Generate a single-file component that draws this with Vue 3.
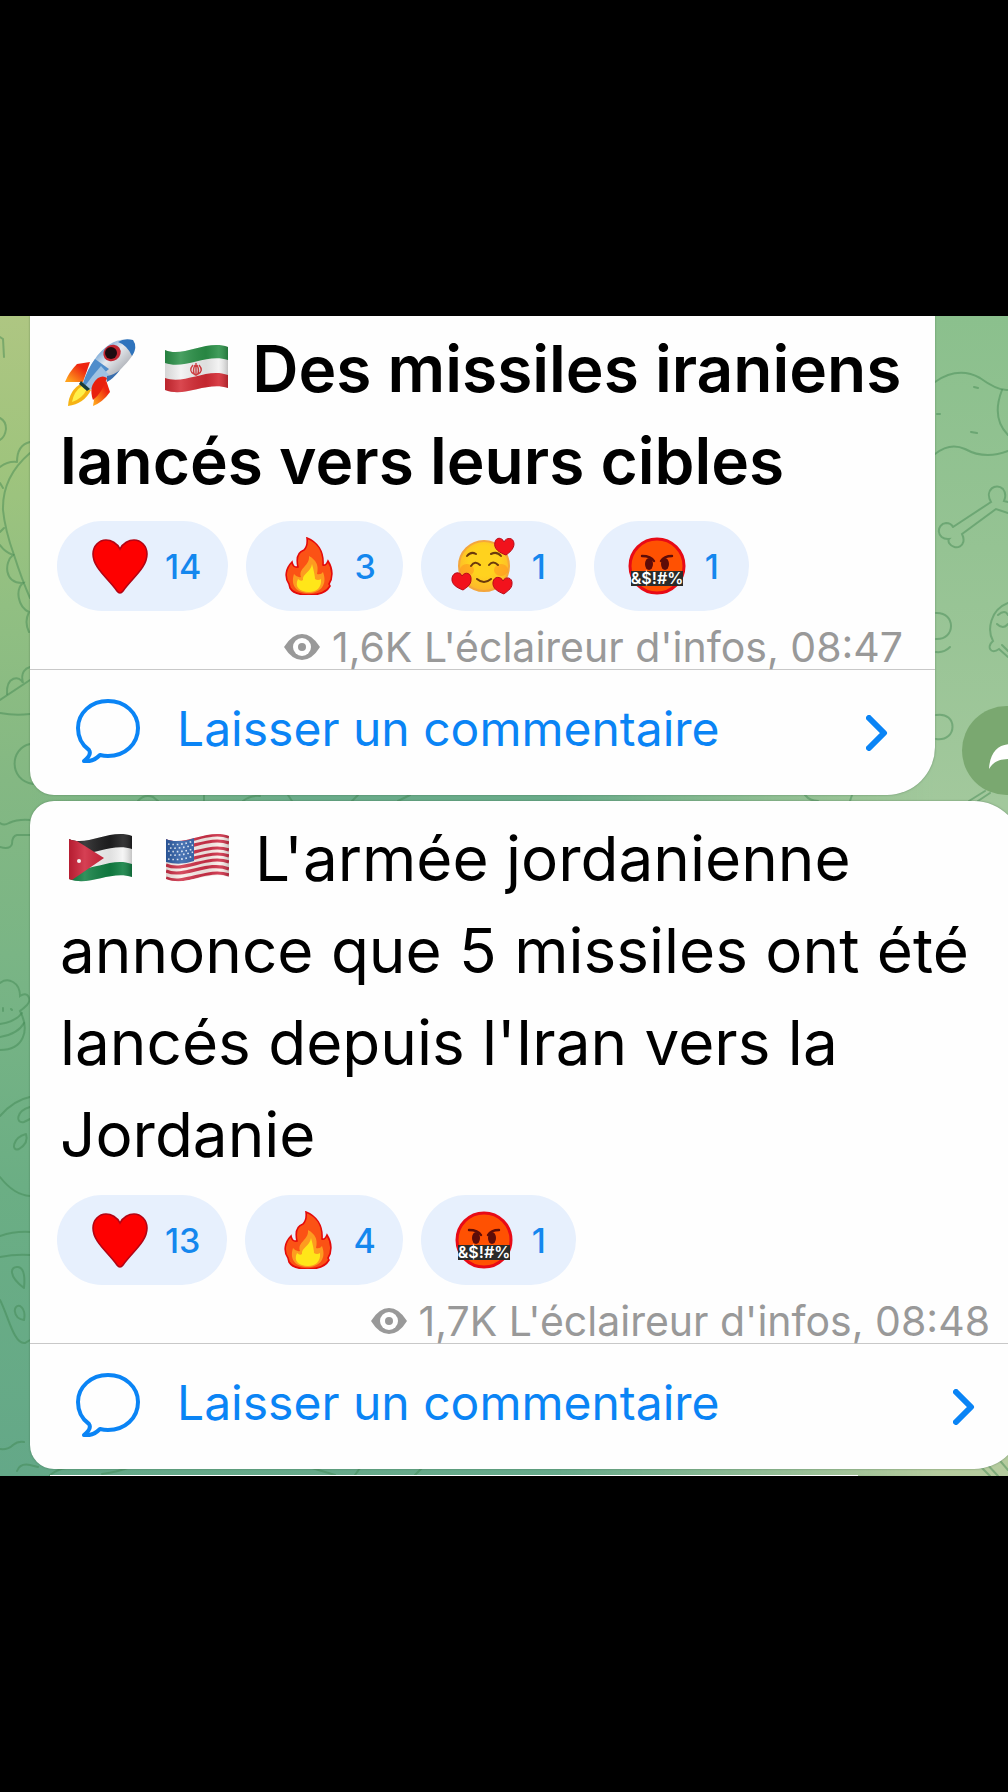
<template>
  <main class="page">
    <!-- 图标定义 -->
    <svg class="sprite" aria-hidden="true">
      <defs>
        <linearGradient id="rocketBody" x1="0" y1="0" x2="1" y2="1">
          <stop offset="0.2" stop-color="#4d8fd0" />
          <stop offset="0.45" stop-color="#e6eaee" />
          <stop offset="0.65" stop-color="#b9bcc2" />
          <stop offset="0.9" stop-color="#3a6fae" />
        </linearGradient>
        <linearGradient id="rocketFin" x1="1" y1="0" x2="0" y2="1">
          <stop offset="0.3" stop-color="#ee2410" />
          <stop offset="0.9" stop-color="#ffa21c" />
        </linearGradient>
        <linearGradient id="flagShade" x1="0" y1="0" x2="1" y2="0">
          <stop offset="0" stop-color="#000" stop-opacity="0.12" />
          <stop offset="0.25" stop-color="#fff" stop-opacity="0.14" />
          <stop offset="0.65" stop-color="#000" stop-opacity="0.08" />
          <stop offset="0.85" stop-color="#fff" stop-opacity="0.1" />
          <stop offset="1" stop-color="#000" stop-opacity="0.2" />
        </linearGradient>
        <radialGradient id="faceGold" cx="0.5" cy="0.4" r="0.6">
          <stop offset="0.5" stop-color="#ffd21e" />
          <stop offset="1" stop-color="#fdb52c" />
        </radialGradient>
        <clipPath id="flagClip">
          <path d="M8 21 C26 29 50 10 71 18 V59 C50 52 28 69 8 61 Z" />
        </clipPath>

        <symbol id="rocket" viewBox="0 0 78 78">
          <path d="M29 33 L16 35 Q8 43 4 53 L22 53 Z" fill="url(#rocketFin)" />
          <path d="M45 51 L49 63 Q42 73 32 77 L35 59 Z" fill="url(#rocketFin)" />
          <path d="M21 54 Q8 61 7 77 Q23 75 30 61 Z" fill="#f6b314" />
          <path d="M21 57 Q13 62 11 73 Q21 70 26 60 Z" fill="#fff04a" />
          <path d="M72 11 C56 7 43 18 36 27 Q27 39 22 55 L29 60 Q45 54 57 43 C67 33 79 22 72 11 Z" fill="url(#rocketBody)" />
          <path d="M72 11 Q63 9 57 13 Q66 16 71 27 Q77 18 72 11 Z" fill="#2f74bd" />
          <path d="M34 30 L48 40 Q34 52 27 58 L22 54 Q27 39 34 30 Z" fill="#4f8dcb" />
          <path d="M40 37 Q31 47 24 57 L29 61 Q41 54 48 46 Z" fill="#9fc2e2" />
          <path d="M46 47 Q53 46 59 41 Q52 50 46 53 Z" fill="#3a6fae" />
          <path d="M37 49 Q27 57 32 71 Q41 64 46 49 Q42 46 37 49 Z" fill="#e8200e" />
          <path d="M20 52 L29 60 L26 62 L18 55 Z" fill="#173c3b" />
          <ellipse cx="51" cy="24" rx="9" ry="8" fill="#c22631" transform="rotate(-35 51 24)" />
          <ellipse cx="50" cy="24" rx="6" ry="6" fill="#1c0b10" />
        </symbol>

        <symbol id="iran" viewBox="0 0 78 78">
          <g clip-path="url(#flagClip)">
            <rect x="8" y="10" width="63" height="60" fill="#f2f2f2" />
            <path d="M8 10 H71 V31 C50 24 28 41 8 34 Z" fill="#2b9148" />
            <path d="M8 49 C28 56 50 38 71 46 V70 H8 Z" fill="#d42a33" />
            <g fill="none" stroke="#d8383c" stroke-width="1.4">
              <path d="M39 34 V47 M36 36 Q31 42 37 45 M42 36 Q47 42 41 45 M38 36 Q35 42 38 46 M40 36 Q43 42 40 46" />
            </g>
            <rect x="8" y="10" width="63" height="60" fill="url(#flagShade)" />
          </g>
        </symbol>

        <symbol id="jordan" viewBox="0 0 78 78">
          <g clip-path="url(#flagClip)">
            <rect x="8" y="10" width="63" height="60" fill="#f4f4f4" />
            <path d="M8 10 H71 V31 C50 24 28 41 8 34 Z" fill="#1f1f20" />
            <path d="M8 49 C28 56 50 38 71 46 V70 H8 Z" fill="#118043" />
            <path d="M8 18 L43 40 L8 64 Z" fill="#cf2138" />
            <circle cx="18" cy="43" r="2" fill="#fff" />
            <rect x="8" y="10" width="63" height="60" fill="url(#flagShade)" />
          </g>
        </symbol>

        <symbol id="usa" viewBox="0 0 78 78">
          <g clip-path="url(#flagClip)">
            <rect x="8" y="10" width="63" height="60" fill="#fbeeea" />
            <g fill="none" stroke="#cf3048" stroke-width="3.2">
              <path d="M8 22 C26 30 50 11 71 19" />
              <path d="M8 28 C26 36 50 17 71 25" />
              <path d="M8 35 C26 43 50 24 71 32" />
              <path d="M8 41 C26 49 50 30 71 38" />
              <path d="M8 47 C26 55 50 36 71 44" />
              <path d="M8 53 C26 61 50 42 71 51" />
              <path d="M8 60 C26 68 50 49 71 57" />
            </g>
            <path d="M8 18 Q22 27 36 20 V43 Q22 48 8 44 Z" fill="#2f5fa8" />
            <g fill="none" stroke="#dfe9f7" stroke-width="1.6" stroke-dasharray="1.6 2.8">
              <path d="M10 26 Q22 28 35 23" />
              <path d="M12 30 Q22 31 35 27" />
              <path d="M10 33 Q22 35 35 31" />
              <path d="M12 37 Q22 38 35 34" />
              <path d="M10 41 Q22 43 35 38" />
            </g>
            <rect x="8" y="10" width="63" height="60" fill="url(#flagShade)" />
          </g>
        </symbol>

        <symbol id="heart" viewBox="0 0 58 58">
          <path d="M29 12 C32 6 38 3 43 3 C50 3 56 9 56 17 C56 31 41 41 32 54 Q29 58 26 54 C17 41 2 31 2 17 C2 9 8 3 15 3 C20 3 26 6 29 12 Z" fill="#fe0000" stroke="#b30413" stroke-width="1.6" />
        </symbol>

        <symbol id="fire" viewBox="0 0 58 58">
          <path d="M27 1 C37 5 44 14 43 28 Q46 29 48 24 C53 32 53 41 49 47 L50 49 Q45 58 29 58 Q14 58 10 51 L9 47 C4 40 6 31 12 25 Q13 31 18 30 C16 21 18 15 24 13 Q28 9 27 1 Z" fill="#fb5215" stroke="#e40a0a" stroke-width="1.6" />
          <path d="M29 19 Q40 25 37 37 Q41 38 43 35 C48 48 40 56 29 56 C17 56 10 49 14 37 Q17 41 21 40 C18 31 30 29 29 19 Z" fill="#fd9b20" />
          <path d="M32 27 Q35 38 35 42 Q38 44 41 42 C42 51 36 55 29 55 C20 55 14 50 18 42 Q21 45 23 43 C22 37 31 35 32 27 Z" fill="#ffe619" />
        </symbol>

        <symbol id="loved" viewBox="0 0 66 58">
          <circle cx="33" cy="29" r="25" fill="url(#faceGold)" stroke="#f4a63c" stroke-width="2" />
          <ellipse cx="16" cy="33" rx="7" ry="6" fill="#ff8c1e" opacity="0.5" />
          <ellipse cx="50" cy="33" rx="7" ry="6" fill="#ff8c1e" opacity="0.5" />
          <g fill="none" stroke="#6b3a0c" stroke-width="2" stroke-linecap="round">
            <path d="M16 19 Q20 14 25 17" />
            <path d="M40 17 Q46 14 50 19" />
            <path d="M20 29 Q24 23 29 28" />
            <path d="M38 28 Q42 23 47 28" />
            <path d="M26 42 Q33 48 40 42" />
          </g>
          <g fill="#f2121c" stroke="#b80a18" stroke-width="1">
            <path d="M53 5 C55 0 63 0 63 7 C63 12 58 16 55 18 C49 16 42 12 44 5 C45 0 51 0 53 5 Z" />
            <path d="M11 39 C14 34 21 36 20 43 C20 48 15 51 12 53 C7 51 0 48 1 41 C2 35 9 34 11 39 Z" />
            <path d="M52 44 C54 39 62 40 61 47 C61 52 55 55 53 57 C48 55 41 52 42 45 C43 39 50 39 52 44 Z" />
          </g>
        </symbol>

        <symbol id="cursing" viewBox="0 0 58 58">
          <circle cx="29" cy="29" r="27" fill="#ff5102" stroke="#e80a16" stroke-width="3" />
          <g fill="none" stroke="#5e0c08" stroke-width="2.4" stroke-linecap="round">
            <path d="M14 19 Q23 19 26 24" />
            <path d="M44 19 Q36 19 33 24" />
          </g>
          <ellipse cx="21" cy="27" rx="4" ry="6" fill="#5e0c08" />
          <ellipse cx="37" cy="27" rx="4" ry="6" fill="#5e0c08" />
          <rect x="3" y="34" width="52" height="15" fill="#2b2b29" />
          <text x="29" y="47" class="curse-text" text-anchor="middle">&amp;$!#%</text>
        </symbol>
      </defs>
    </svg>

    <section class="chat">
      <!-- 聊天壁纸 -->
      <svg class="wallpaper" viewBox="0 316 1008 1160" preserveAspectRatio="none" aria-hidden="true">
        <defs>
          <linearGradient id="wallLeft" x1="0" y1="0" x2="0" y2="1">
            <stop offset="0" stop-color="#aec682" />
            <stop offset="0.13" stop-color="#9fc47d" />
            <stop offset="0.25" stop-color="#91bf82" />
            <stop offset="0.4" stop-color="#84b883" />
            <stop offset="0.55" stop-color="#7ab585" />
            <stop offset="0.75" stop-color="#6bae84" />
            <stop offset="1" stop-color="#64a888" />
          </linearGradient>
          <linearGradient id="wallRight" x1="0" y1="0" x2="0" y2="1">
            <stop offset="0" stop-color="#8bc08d" />
            <stop offset="0.2" stop-color="#95c393" />
            <stop offset="0.42" stop-color="#a2c89c" />
            <stop offset="1" stop-color="#b5cb9e" />
          </linearGradient>
          <linearGradient id="wallFade" x1="0" y1="0" x2="1" y2="0">
            <stop offset="0.55" stop-color="#000" />
            <stop offset="0.93" stop-color="#fff" />
          </linearGradient>
          <linearGradient id="wallMid" x1="0" y1="0" x2="1" y2="0">
            <stop offset="0.03" stop-color="#66a98a" stop-opacity="0" />
            <stop offset="0.3" stop-color="#66a98a" stop-opacity="0.9" />
            <stop offset="0.6" stop-color="#66a98a" stop-opacity="0.9" />
            <stop offset="0.93" stop-color="#66a98a" stop-opacity="0" />
          </linearGradient>
          <mask id="wallMask">
            <rect x="0" y="316" width="1008" height="1160" fill="url(#wallFade)" />
          </mask>
        </defs>
        <rect x="0" y="316" width="1008" height="1160" fill="url(#wallLeft)" />
        <rect x="0" y="316" width="1008" height="1160" fill="url(#wallMid)" />
        <rect x="0" y="316" width="1008" height="1160" fill="url(#wallRight)" mask="url(#wallMask)" />
        <g class="doodles">
          <path v-for="(d, index) in doodles" :key="index" :d="d" />
        </g>
      </svg>

      <!-- 消息列表 -->
      <div v-for="post in posts" :key="post.id" :class="['row', post.share ? 'row-share' : 'row-wide']">
        <article :class="['bubble', post.share ? 'bubble-cut' : 'bubble-full']">
          <p :class="['message', { 'message-bold': post.bold }]">
            <template v-for="name in post.emojis" :key="name">
              <svg class="emoji" role="img" :aria-label="name"><use :href="'#' + name" /></svg>{{ ' ' }}
            </template>{{ post.text }}
          </p>

          <div class="reactions">
            <button v-for="r in post.reactions" :key="r.icon" type="button" class="reaction">
              <svg :class="['reaction-icon', { 'reaction-loved': r.icon === 'loved' }]" role="img" :aria-label="r.icon">
                <use :href="'#' + r.icon" />
              </svg>
              <span class="reaction-count">{{ r.count }}</span>
            </button>
          </div>

          <div class="meta">
            <svg class="eye" viewBox="0 0 36 26" aria-hidden="true">
              <path d="M0 13 Q8 0 18 0 Q28 0 36 13 Q28 26 18 26 Q8 26 0 13 Z" fill="#999" />
              <circle cx="18" cy="13" r="9" fill="#fff" />
              <circle cx="18" cy="13" r="4" fill="#999" />
            </svg>
            <span>{{ post.views }} L'éclaireur d'infos, {{ post.time }}</span>
          </div>

          <button type="button" class="comment">
            <svg class="comment-icon" viewBox="0 0 64 64" aria-hidden="true">
              <path d="M32 2 C49 2 62 14 62 29 C62 45 49 57 32 57 Q28 57 24 56 C19 61 14 63 8 62 C13 58 15 54 13 51 C6 46 2 38 2 29 C2 14 15 2 32 2 Z" fill="none" stroke="currentColor" stroke-width="4" stroke-linejoin="round" />
            </svg>
            <span class="comment-label">Laisser un commentaire</span>
            <svg class="chevron" viewBox="0 0 22 36" aria-hidden="true">
              <path d="M3 3 L18 18 L3 33" fill="none" stroke="currentColor" stroke-width="6" stroke-linecap="round" stroke-linejoin="round" />
            </svg>
          </button>
        </article>

        <button v-if="post.share" type="button" class="share" aria-label="Partager">
          <svg viewBox="0 0 89 89" aria-hidden="true">
            <path d="M27 63 C28 46 36 38 49 38 V27 L70 45 L49 63 V53 C38 53 32 55 27 63 Z" fill="#fff" />
          </svg>
        </button>
      </div>

      <div class="next-edge"></div>
    </section>
  </main>
</template>

<script setup>
import { ref } from 'vue'

const posts = ref([
  {
    id: 1,
    emojis: ['rocket', 'iran'],
    text: 'Des missiles iraniens lancés vers leurs cibles',
    bold: true,
    share: true,
    views: '1,6K',
    time: '08:47',
    reactions: [
      { icon: 'heart', count: 14 },
      { icon: 'fire', count: 3 },
      { icon: 'loved', count: 1 },
      { icon: 'cursing', count: 1 }
    ]
  },
  {
    id: 2,
    emojis: ['jordan', 'usa'],
    text: "L'armée jordanienne annonce que 5 missiles ont été lancés depuis l'Iran vers la Jordanie",
    bold: false,
    share: false,
    views: '1,7K',
    time: '08:48',
    reactions: [
      { icon: 'heart', count: 13 },
      { icon: 'fire', count: 4 },
      { icon: 'cursing', count: 1 }
    ]
  }
])

// 壁纸线条
const doodles = [
  'M0 337 L3 339 L4 357',
  'M0 418 Q6 421 6 429 Q5 437 0 440',
  'M30 453 Q2 477 3 510 Q5 530 14 555 Q22 580 30 598',
  'M17 462 Q17 445 30 442 M0 467 Q8 461 17 462',
  'M0 483 L3 488 M0 532 L4 528',
  'M0 545 Q5 552 13 555 C4 562 4 584 23 583 C15 590 18 607 29 612 Q24 622 29 632',
  'M0 700 L30 680 M0 713 Q15 716 30 714',
  'M7 694 C6 676 20 675 23 683 C20 672 26 668 30 667',
  'M30 744 C10 748 8 780 33 784',
  'M0 823 Q4 826 9 823 Q18 819 30 820 M30 835 L17 835 Q12 836 12 844 Q10 850 0 847',
  'M0 983 C8 977 20 982 20 996 C28 990 32 1000 27 1005 Q23 1009 20 1011 C30 1030 24 1050 0 1050',
  'M0 1024 Q15 1022 22 1013 M0 1037 Q18 1034 24 1023 M3 1008 V1011 M11 1009 L12 1010',
  'M0 1116 Q14 1100 30 1097 M0 1177 Q14 1195 30 1196',
  'M30 1107 C16 1111 15 1124 24 1122 L30 1119 M26 1134 C12 1138 11 1152 19 1149 Q29 1143 26 1134',
  'M0 1236 Q15 1231 30 1232 M0 1257 Q15 1254 30 1255 M0 1300 C8 1315 14 1345 25 1343 L30 1340',
  'M24 1288 C8 1276 10 1266 18 1267 C25 1268 25 1278 24 1288 M24 1320 C12 1318 13 1304 20 1306 Q26 1310 24 1320',
  'M0 1449 Q8 1450 13 1445 Q18 1441 24 1442 M17 1471 Q20 1463 30 1465 L38 1467',
  'M50 1475 Q58 1469 66 1468 M102 1474 Q118 1472 130 1467 M312 1468 L335 1475 M355 1475 L360 1468 M415 1475 L422 1468',
  'M138 801 Q144 794 153 797 L158 801 M204 795 V801 M243 801 Q250 795 260 796 M288 795 L292 801 M352 801 L358 795 M398 801 L410 795',
  'M805 795 Q810 801 818 801 M850 801 L852 795',
  'M935 382 Q958 366 980 378 Q998 391 1008 390 M935 454 Q950 442 965 449 Q985 460 1008 451',
  'M1002 390 C995 408 997 424 1008 435 M974 387 L978 388 M971 432 L977 433 M937 414 L940 414',
  'M953 527 L991 502 C984 490 996 482 1003 489 Q1007 494 1004 501 L1008 502 M1008 513 L996 509 L962 534 C968 546 955 552 949 543 Q948 540 949 539 C936 540 936 524 946 523 Q951 523 953 527',
  'M936 613 C956 612 956 640 936 639 M936 652 Q944 653 950 647',
  'M1008 603 C990 610 987 630 993 641 C986 647 991 655 999 649 L1008 657 M998 615 Q1005 609 1008 615 M997 624 Q1003 630 1008 624 M1002 645 L1008 651',
  'M936 715 C958 711 958 742 936 739',
  'M969 801 L985 791 M978 801 L990 793 M990 1476 L978 1464 M998 1476 L985 1462 M1008 1470 L996 1456'
]
</script>

<style>
body {
  margin: 0;
  background: #000;
}
</style>

<style scoped>
/* ===== 页面 ===== */
.page {
  min-height: 100vh;
  box-sizing: border-box;
  padding-top: 316px;
  background: #000;
  font-family: Inter, "Liberation Sans", sans-serif;
}

.sprite {
  position: absolute;
  width: 0;
  height: 0;
}

.chat {
  position: relative;
  display: flex;
  flex-direction: column;
  gap: 6px;
  padding-left: 30px;
  overflow: hidden;
}

.wallpaper {
  position: absolute;
  inset: 0;
  width: 100%;
  height: 100%;
}

.doodles {
  fill: none;
  stroke: #3f8450;
  stroke-opacity: 0.45;
  stroke-width: 2;
  stroke-linecap: round;
}

/* ===== 消息气泡 ===== */
.row {
  position: relative;
  display: flex;
  align-items: flex-end;
  gap: 27px;
}

.row-share {
  margin-right: -43px;
}

.row-wide {
  margin-right: -14px;
}

.bubble {
  flex: 1;
  min-width: 0;
  background: #fefefe;
  box-shadow: 0 0 2px rgba(40, 80, 50, 0.5);
}

.bubble-cut {
  padding-top: 7px;
  border-radius: 0 0 48px 24px;
}

.bubble-full {
  padding-top: 12px;
  border-radius: 24px 48px 48px 24px;
}

.message {
  margin: 0;
  padding: 0 24px 0 30px;
  font-size: 62px;
  line-height: 92px;
  color: #000;
}

.message-bold {
  font-size: 64px;
  font-weight: 600;
}

.emoji {
  width: 78px;
  height: 78px;
  margin: -10px 1px;
  vertical-align: -5px;
}

/* ===== 表情回应 ===== */
.reactions {
  display: flex;
  gap: 18px;
  padding: 14px 27px 0;
}

.reaction {
  display: flex;
  align-items: center;
  gap: 16px;
  height: 90px;
  padding: 0 27px 0 34px;
  border: none;
  border-radius: 45px;
  background: #e7f0fd;
  color: #1487ee;
  font-family: inherit;
  font-size: 34px;
  font-weight: 500;
  cursor: pointer;
}

.reaction-icon {
  width: 58px;
  height: 58px;
}

.reaction-loved {
  width: 66px;
  margin: 0 -4px;
}

.reaction-count {
  min-width: 20px;
  text-align: center;
}

.curse-text {
  fill: #fff;
  font-family: Inter, "Liberation Sans", sans-serif;
  font-size: 16px;
  font-weight: 600;
}

/* ===== 浏览信息 ===== */
.meta {
  display: flex;
  justify-content: flex-end;
  align-items: center;
  gap: 12px;
  padding: 14px 32px 0 27px;
  line-height: 44px;
  font-size: 41px;
  color: #999;
  white-space: nowrap;
  border-bottom: 1px solid #c8c8c8;
}

.eye {
  width: 36px;
  height: 26px;
}

/* ===== 评论按钮 ===== */
.comment {
  display: flex;
  align-items: center;
  width: 100%;
  height: 125px;
  padding: 0 47px 0 46px;
  border: none;
  background: none;
  color: #0a84f5;
  font-family: inherit;
  font-size: 48px;
  text-align: left;
  cursor: pointer;
}

.comment-icon {
  width: 64px;
  height: 64px;
  margin-bottom: 4px;
}

.comment-label {
  flex: 1;
  padding-left: 37px;
  padding-bottom: 8px;
}

.chevron {
  width: 22px;
  height: 36px;
}

/* ===== 分享按钮 ===== */
.share {
  flex: none;
  width: 89px;
  height: 89px;
  padding: 0;
  border: none;
  border-radius: 50%;
  background: #7aa870;
  cursor: pointer;
}

.share svg {
  display: block;
  width: 100%;
  height: 100%;
}

.next-edge {
  position: relative;
  height: 1px;
  margin: 0 150px 0 20px;
  background: #fefefe;
}
</style>
